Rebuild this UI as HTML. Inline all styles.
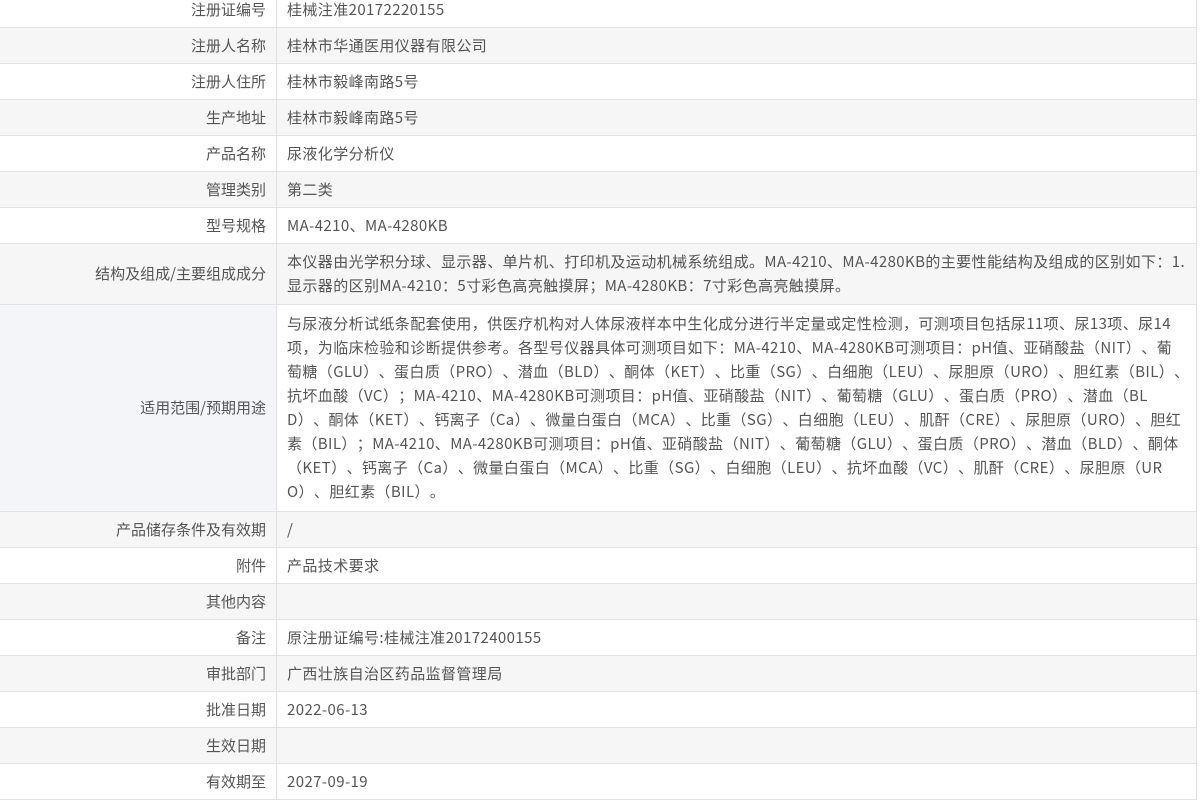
<!DOCTYPE html>
<html><head><meta charset="utf-8"><style>
html,body{margin:0;padding:0;background:#fff;width:1200px;height:793px;overflow:hidden}
body{font-family:"Noto Sans CJK SC","Liberation Sans",sans-serif;font-size:15px;color:#555;text-spacing-trim:space-all}
table{position:absolute;left:0;top:-9px;width:1197px;border-collapse:collapse;table-layout:fixed}
td{border:1px solid #e2e2e2;border-left:none;padding:0;line-height:24px;height:35px}
td.l{width:266px;text-align:right;padding-right:10px}
td.v{padding-left:10px;white-space:nowrap;border-right:1px solid #e2e2e2;letter-spacing:0.4px}
tr.g td{background:#f6f6f6}
tr.b td.l{background:#f3f5f9}
</style></head><body>
<table>
<tr><td class="l">注册证编号</td><td class="v">桂械注准20172220155</td></tr>
<tr class="g"><td class="l">注册人名称</td><td class="v">桂林市华通医用仪器有限公司</td></tr>
<tr><td class="l">注册人住所</td><td class="v">桂林市毅峰南路5号</td></tr>
<tr class="g"><td class="l">生产地址</td><td class="v">桂林市毅峰南路5号</td></tr>
<tr><td class="l">产品名称</td><td class="v">尿液化学分析仪</td></tr>
<tr class="g"><td class="l">管理类别</td><td class="v">第二类</td></tr>
<tr><td class="l">型号规格</td><td class="v">MA-4210、MA-4280KB</td></tr>
<tr class="g"><td class="l" style="height:60px">结构及组成/主要组成成分</td><td class="v">本仪器由光学积分球、显示器、单片机、打印机及运动机械系统组成。MA-4210、MA-4280KB的主要性能结构及组成的区别如下：1.<br>显示器的区别MA-4210：5寸彩色高亮触摸屏；MA-4280KB：7寸彩色高亮触摸屏。</td></tr>
<tr class="b"><td class="l" style="height:206px">适用范围/预期用途</td><td class="v">与尿液分析试纸条配套使用，供医疗机构对人体尿液样本中生化成分进行半定量或定性检测，可测项目包括尿11项、尿13项、尿14<br>项，为临床检验和诊断提供参考。各型号仪器具体可测项目如下：MA-4210、MA-4280KB可测项目：pH值、亚硝酸盐（NIT）、葡<br>萄糖（GLU）、蛋白质（PRO）、潜血（BLD）、酮体（KET）、比重（SG）、白细胞（LEU）、尿胆原（URO）、胆红素（BIL）、<br>抗坏血酸（VC）；MA-4210、MA-4280KB可测项目：pH值、亚硝酸盐（NIT）、葡萄糖（GLU）、蛋白质（PRO）、潜血（BL<br>D）、酮体（KET）、钙离子（Ca）、微量白蛋白（MCA）、比重（SG）、白细胞（LEU）、肌酐（CRE）、尿胆原（URO）、胆红<br>素（BIL）；MA-4210、MA-4280KB可测项目：pH值、亚硝酸盐（NIT）、葡萄糖（GLU）、蛋白质（PRO）、潜血（BLD）、酮体<br>（KET）、钙离子（Ca）、微量白蛋白（MCA）、比重（SG）、白细胞（LEU）、抗坏血酸（VC）、肌酐（CRE）、尿胆原（UR<br>O）、胆红素（BIL）。</td></tr>
<tr class="g"><td class="l">产品储存条件及有效期</td><td class="v">/</td></tr>
<tr><td class="l">附件</td><td class="v">产品技术要求</td></tr>
<tr class="g"><td class="l">其他内容</td><td class="v"></td></tr>
<tr><td class="l">备注</td><td class="v">原注册证编号:桂械注准20172400155</td></tr>
<tr class="g"><td class="l">审批部门</td><td class="v">广西壮族自治区药品监督管理局</td></tr>
<tr><td class="l">批准日期</td><td class="v">2022-06-13</td></tr>
<tr class="g"><td class="l">生效日期</td><td class="v"></td></tr>
<tr><td class="l">有效期至</td><td class="v">2027-09-19</td></tr>
</table>
</body></html>
